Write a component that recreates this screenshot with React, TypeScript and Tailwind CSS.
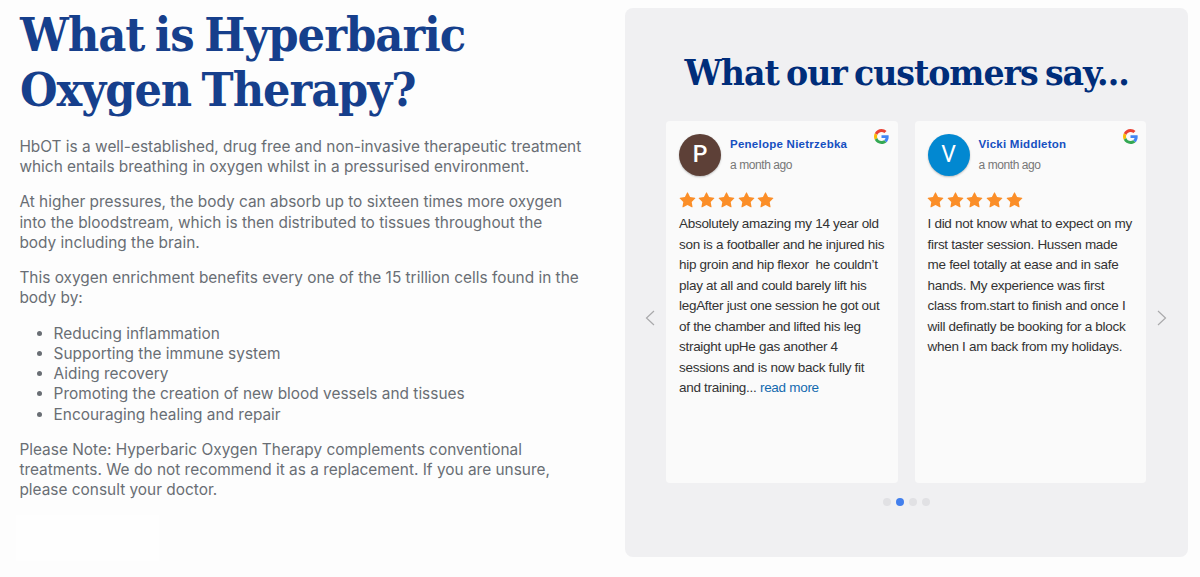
import React from 'react';

type Review = {
  name: string;
  initial: string;
  avatarClass: string;
  time: string;
  lines: string[];
  truncated: boolean;
};

const reviews: Review[] = [
  {
    name: 'Penelope Nietrzebka',
    initial: 'P',
    avatarClass: 'bg-[#5d4037] font-medium',
    time: 'a month ago',
    lines: [
      'Absolutely amazing my 14 year old',
      'son is a footballer and he injured his',
      'hip groin and hip flexor  he couldn’t',
      'play at all and could barely lift his',
      'legAfter just one session he got out',
      'of the chamber and lifted his leg',
      'straight upHe gas another 4',
      'sessions and is now back fully fit',
      'and training... ',
    ],
    truncated: true,
  },
  {
    name: 'Vicki Middleton',
    initial: 'V',
    avatarClass: 'bg-[#0288d1] font-normal',
    time: 'a month ago',
    lines: [
      'I did not know what to expect on my',
      'first taster session. Hussen made',
      'me feel totally at ease and in safe',
      'hands. My experience was first',
      'class from.start to finish and once I',
      'will definatly be booking for a block',
      'when I am back from my holidays.',
    ],
    truncated: false,
  },
];

const benefits = [
  'Reducing inflammation',
  'Supporting the immune system',
  'Aiding recovery',
  'Promoting the creation of new blood vessels and tissues',
  'Encouraging healing and repair',
];

const GoogleIcon = () => (
  <svg viewBox="0 0 48 48" className="size-[15px]">
    <path
      fill="#EA4335"
      d="M24 9.5c3.54 0 6.71 1.22 9.21 3.6l6.85-6.85C35.9 2.38 30.47 0 24 0 14.62 0 6.51 5.38 2.56 13.22l7.98 6.19C12.43 13.72 17.74 9.5 24 9.5z"
    />
    <path
      fill="#4285F4"
      d="M46.98 24.55c0-1.57-.15-3.09-.38-4.55H24v9.02h12.94c-.58 2.96-2.26 5.48-4.78 7.18l7.73 6c4.51-4.18 7.09-10.36 7.09-17.65z"
    />
    <path
      fill="#FBBC05"
      d="M10.53 28.59c-.48-1.45-.76-2.99-.76-4.59s.27-3.14.76-4.59l-7.98-6.19C.92 16.46 0 20.12 0 24c0 3.88.92 7.54 2.56 10.78l7.97-6.19z"
    />
    <path
      fill="#34A853"
      d="M24 48c6.48 0 11.93-2.13 15.89-5.81l-7.73-6c-2.15 1.45-4.92 2.3-8.16 2.3-6.26 0-11.57-4.22-13.47-9.91l-7.98 6.19C6.51 42.62 14.62 48 24 48z"
    />
  </svg>
);

const Star = () => (
  <svg viewBox="0 0 1792 1792" className="size-[17px]">
    <path
      fill="#fb8e28"
      d="M1728 647q0 22-26 48l-363 354 86 500q1 7 1 20 0 21-10.500 35.500t-30.500 14.500q-19 0-40-12l-449-236-449 236q-22 12-40 12-21 0-31.500-14.500t-10.500-35.500q0-6 2-20l86-500-364-354q-25-27-25-48 0-37 56-46l502-73 225-455q19-41 49-41t49 41l225 455 502 73q56 9 56 46z"
    />
  </svg>
);

const Arrow: React.FC<{ points: string; label: string }> = ({ points, label }) => (
  <button aria-label={label} className="flex h-4 w-[10px] items-center justify-center">
    <svg viewBox="0 0 10 16" className="h-4 w-[10px]" fill="none" stroke="#a9a9ab" strokeWidth="1.2">
      <polyline points={points} />
    </svg>
  </button>
);

const ReviewCard: React.FC<{ review: Review }> = ({ review }) => (
  <article className="h-[362px] w-[231.5px] rounded bg-[#fafafa] pt-[13px] pl-[13px]">
    <div className="flex h-[42px]">
      <div
        className={`flex size-[42px] items-center justify-center rounded-full font-[Roboto] text-[23px] text-white shadow-[0_1px_2px_rgba(0,0,0,0.25)] ${review.avatarClass}`}
      >
        {review.initial}
      </div>
      <div className="ml-[9px] w-[144px] whitespace-nowrap">
        <div className="mt-[1px] text-[11.5px] leading-[18px] font-bold tracking-[0.25px] text-[#154fc1]">
          {review.name}
        </div>
        <div className="mt-[2px] text-[12px] leading-[20px] tracking-[-0.42px] text-[#777]">{review.time}</div>
      </div>
      <div className="-mt-[5px]">
        <GoogleIcon />
      </div>
    </div>
    <div className="mt-[16px] -ml-[0.5px] flex gap-[2.7px]">
      {[1, 2, 3, 4, 5].map((n) => (
        <Star key={n} />
      ))}
    </div>
    <div className="mt-[5px] text-[13.5px] leading-[20.5px] tracking-[-0.29px] whitespace-pre text-[#333]">
      {review.lines.map((line, i) => (
        <div key={line}>
          {line}
          {review.truncated && i === review.lines.length - 1 && <a className="text-[#136aaf]">read more</a>}
        </div>
      ))}
    </div>
  </article>
);

export default function App() {
  return (
    <main className="flex h-[577px] w-[1200px] overflow-hidden bg-[#fdfdfd]">
      <section className="w-[625px] pt-[7px] pl-[19px] font-[Inter,sans-serif] text-[15.42px] leading-[20.2px] text-[#696e74]">
        <h1 className="ml-px h-[110px] font-['DejaVu_Serif_Condensed','DejaVu_Serif',serif] text-[47px] leading-[55px] font-bold tracking-[-1px] whitespace-nowrap text-[#163f8c] [word-spacing:-3.5px]">
          <span className="block w-max origin-left scale-x-[1.026]">What is Hyperbaric</span>
          <span className="block w-max origin-left scale-x-[1.02]">Oxygen Therapy?</span>
        </h1>
        <div className="mt-[19.8px] ml-[0.4px] flex flex-col gap-[15.2px] whitespace-nowrap">
          <p>
            HbOT is a well-established, drug free and non-invasive therapeutic treatment
            <br />
            which entails breathing in oxygen whilst in a pressurised environment.
          </p>
          <p>
            At higher pressures, the body can absorb up to sixteen times more oxygen
            <br />
            into the bloodstream, which is then distributed to tissues throughout the
            <br />
            body including the brain.
          </p>
          <p>
            This oxygen enrichment benefits every one of the 15 trillion cells found in the
            <br />
            body by:
          </p>
          <ul className="list-disc pl-[34.2px]">
            {benefits.map((benefit) => (
              <li key={benefit}>{benefit}</li>
            ))}
          </ul>
          <p>
            Please Note: Hyperbaric Oxygen Therapy complements conventional
            <br />
            treatments. We do not recommend it as a replacement. If you are unsure,
            <br />
            please consult your doctor.
          </p>
        </div>
        <div className="mt-[14px] -ml-[3px] h-[46px] w-[143px] bg-[#fefefe]" />
      </section>

      <section className="mt-2 h-[549px] w-[563px] rounded-lg bg-[#f0f0f2] font-['Liberation_Sans',Arial,sans-serif]">
        <h2 className="flex h-[113px] justify-center pt-[40px] font-['DejaVu_Serif_Condensed','DejaVu_Serif',serif] text-[36px] leading-[48px] font-bold whitespace-nowrap text-[#002d7a]">
          <span className="scale-x-[1.025] tracking-[-1px] [word-spacing:-3.2px]">What our customers say...</span>
        </h2>
        <div className="flex items-center pl-[20px]">
          <div className="mt-[32px] mr-[11px]">
            <Arrow label="Previous" points="9,1 1.500,8 9,15" />
          </div>
          <div className="flex gap-[17px]">
            {reviews.map((review) => (
              <ReviewCard key={review.name} review={review} />
            ))}
          </div>
          <div className="mt-[32px] ml-[11px]">
            <Arrow label="Next" points="1,1 8.500,8 1,15" />
          </div>
        </div>
        <div className="mt-[15px] flex justify-center gap-[5px]">
          <span className="size-2 rounded-full bg-[#e1e1e4]" />
          <span className="size-2 rounded-full bg-[#427fed]" />
          <span className="size-2 rounded-full bg-[#e1e1e4]" />
          <span className="size-2 rounded-full bg-[#e1e1e4]" />
        </div>
      </section>
    </main>
  );
}
